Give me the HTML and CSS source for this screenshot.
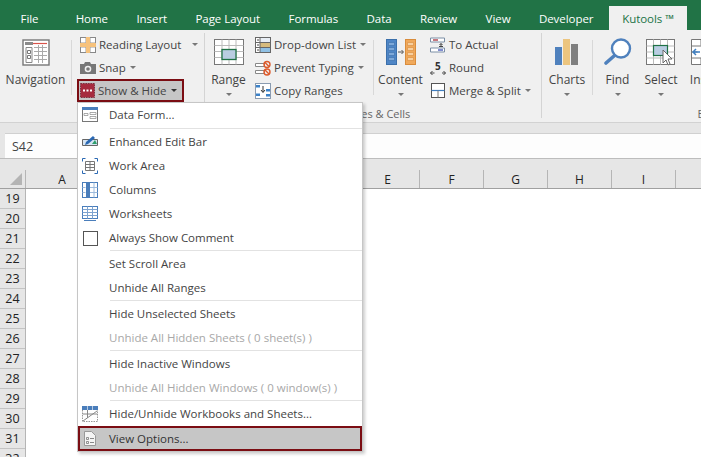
FILE: index.html
```html
<!DOCTYPE html>
<html lang="en">
<head>
    <meta charset="UTF-8">
    <title>Kutools - Show &amp; Hide</title>
    <link rel="stylesheet" href="styles.css">
</head>
<body>

    <!-- tabs -->
    <div class="tabs">
        <span class="tab tab-file">File</span>
        <span class="tab">Home</span>
        <span class="tab">Insert</span>
        <span class="tab">Page Layout</span>
        <span class="tab">Formulas</span>
        <span class="tab">Data</span>
        <span class="tab">Review</span>
        <span class="tab">View</span>
        <span class="tab">Developer</span>
        <span class="tab tab-active">Kutools ™</span>
    </div>

    <!-- ribbon -->
    <div class="ribbon">
        <div class="group group-view">
            <div class="big big-nav">
                <svg class="big-icon" width="28" height="27" viewBox="0 0 28 27">
                    <rect x="1" y="1" width="26" height="25" fill="#fff" stroke="#777" stroke-width="1.4"/>
                    <path d="M3 3h8v3H3z" fill="#8a8a8a"/>
                    <path d="M11 4.500h14" stroke="#d9534a" stroke-width="1.200"/>
                    <path d="M4 8.500h6v15H4z" fill="#fff" stroke="#888"/>
                    <path d="M5.500 11.500h3v3h-3zM5.500 16.500h3v3h-3z" fill="#fff" stroke="#777"/>
                    <path d="M12 8.500h13M12 12.500h13M12 16.500h13M12 20.500h13M16.500 6v18M20.500 6v18" stroke="#aaa"/>
                </svg>
                <span class="big-label">Navigation</span>
            </div>
            <div class="short-sep"></div>
            <div class="small-col col-view">
                <div class="small">
                    <svg width="16" height="16" viewBox="0 0 16 16">
                        <rect x=".5" y=".5" width="15" height="15" fill="#fff" stroke="#888"/>
                        <path d="M6 .5v15M10 .5v15M.5 6h15M.5 10h15" stroke="#999"/>
                        <path d="M6 0h4v16H6zM0 6h16v4H0z" fill="#f6c27c"/>
                    </svg>
                    <span class="small-label">Reading Layout</span>
                    <i class="caret caret-far"></i>
                </div>
                <div class="small">
                    <svg width="16" height="16" viewBox="0 0 16 16">
                        <path d="M0 4h4l1-2h5l1 2h5v10H0z" fill="#777"/>
                        <circle cx="8" cy="9" r="3.300" fill="#f0f0f0"/>
                        <circle cx="8" cy="9" r="1.800" fill="#777"/>
                    </svg>
                    <span class="small-label">Snap</span>
                    <i class="caret"></i>
                </div>
                <div class="small small-hl">
                    <svg width="15" height="15" viewBox="0 0 15 15">
                        <rect x=".5" y=".5" width="14" height="14" fill="#a62b3e" stroke="#7a3340" stroke-dasharray="1.500 1"/>
                        <path d="M3 6.500h2v2H3zM6.500 6.500h2v2h-2zM10 6.500h2v2h-2z" fill="#fff"/>
                    </svg>
                    <span class="small-label">Show &amp; Hide</span>
                    <i class="caret caret-dark"></i>
                </div>
            </div>
        </div>

        <div class="group group-range">
            <div class="group-body">
                <div class="big big-range">
                    <svg class="big-icon" width="30" height="26" viewBox="0 0 30 26">
                        <rect x=".5" y=".5" width="29" height="25" fill="#fff" stroke="#777"/>
                        <path d="M.5 6.500h29M.5 12.500h29M.5 18.500h29M8 .5v25M15 .5v25M22 .5v25" stroke="#bbb"/>
                        <rect x="8" y="10.500" width="14" height="10" fill="#b9cde2" stroke="#1f7246" stroke-width="1.300"/>
                    </svg>
                    <span class="big-label">Range</span>
                    <i class="caret caret-big"></i>
                </div>
                <div class="small-col col-drop">
                    <div class="small">
                        <svg width="16" height="16" viewBox="0 0 16 16">
                            <rect x=".5" y=".5" width="15" height="15" fill="#fff" stroke="#666"/>
                            <path d="M5 1h10v4H5z" fill="#e8eef5"/>
                            <path d="M5 6h10v4H5z" fill="#d6bb7d"/>
                            <path d="M5 11h10v4H5z" fill="#8fc0e4"/>
                            <path d="M5 .5v15M.5 5.500h15M.5 10.500h15" stroke="#666"/>
                            <path d="M2 3h2M2 8h2M2 13h2" stroke="#444"/>
                        </svg>
                        <span class="small-label">Drop-down List</span>
                        <i class="caret"></i>
                    </div>
                    <div class="small">
                        <svg width="16" height="16" viewBox="0 0 16 16">
                            <path d="M.5 3.500h9v3h-9zM.5 10.500h9v3h-9z" fill="#fff" stroke="#888"/>
                            <g fill="none" stroke="#dd5a2b" stroke-width="1.400">
                                <circle cx="12" cy="4.500" r="3"/>
                                <circle cx="12" cy="12" r="3"/>
                                <path d="M10 2.500l4 4M10 10l4 4"/>
                            </g>
                        </svg>
                        <span class="small-label">Prevent Typing</span>
                        <i class="caret"></i>
                    </div>
                    <div class="small">
                        <svg width="16" height="16" viewBox="0 0 16 16">
                            <rect x=".5" y=".5" width="15" height="15" fill="#fff" stroke="#8a9bb0"/>
                            <path d="M1 2h4v2.500H1zM1 10.500h4V13H1zM11 6h4v2.500h-4zM11 11h4v2.500h-4z" fill="#3b82c9"/>
                            <path d="M8 3v6M6 7l2 2.500L10 7" fill="none" stroke="#333"/>
                        </svg>
                        <span class="small-label">Copy Ranges</span>
                    </div>
                </div>
                <div class="short-sep"></div>
                <div class="big big-content">
                    <svg class="big-icon" width="30" height="26" viewBox="0 0 30 26">
                        <rect x=".5" y=".5" width="10" height="25" fill="#4f86c6" stroke="#3c70ab"/>
                        <path d="M2.500 3.500h6v3h-6zM2.500 8.500h6v3h-6zM2.500 13.500h6v3h-6zM2.500 18.500h6v3h-6z" fill="#7fa9d8" stroke="#3c70ab" stroke-width=".6"/>
                        <rect x="19.500" y=".5" width="10" height="25" fill="#f0a95b" stroke="#d98c3c"/>
                        <path d="M21.500 3.500h6v3h-6zM21.500 8.500h6v3h-6zM21.500 13.500h6v3h-6zM21.500 18.500h6v3h-6z" fill="#f7cf9f" stroke="#d98c3c" stroke-width=".6"/>
                        <path d="M12 13h5M15.500 11l2 2-2 2" fill="none" stroke="#555"/>
                    </svg>
                    <span class="big-label">Content</span>
                    <i class="caret caret-big"></i>
                </div>
                <div class="small-col col-actual">
                    <div class="small">
                        <svg width="16" height="16" viewBox="0 0 16 16">
                            <path d="M.5 1h14v4H.5zM.5 11h14v4H.5z" fill="#fff" stroke="#7b8ea5"/>
                            <path d="M3 3h5" stroke="#a01c28" stroke-width="1.200"/>
                            <path d="M8 13h5" stroke="#2b3fb0" stroke-width="1.200"/>
                            <path d="M9 9.500h4M11 9V6.500M9.500 8L11 6.500 12.500 8" fill="none" stroke="#444"/>
                        </svg>
                        <span class="small-label">To Actual</span>
                    </div>
                    <div class="small">
                        <svg width="16" height="16" viewBox="0 0 16 16">
                            <text x="5" y="10" class="round-five">5</text>
                            <path d="M.5 13h4M12 13h3.500M2.500 11l-2 2 2 2M13.500 11l2 2-2 2" fill="none" stroke="#444"/>
                        </svg>
                        <span class="small-label">Round</span>
                    </div>
                    <div class="small">
                        <svg width="16" height="15" viewBox="0 0 16 15">
                            <rect x="1.500" y=".5" width="13" height="14" fill="#fff" stroke="#555"/>
                            <path d="M1.500 7.500h13" stroke="#3f7fc1" stroke-width="1.200"/>
                            <path d="M8 7.500v7" stroke="#777"/>
                        </svg>
                        <span class="small-label">Merge &amp; Split</span>
                        <i class="caret"></i>
                    </div>
                </div>
            </div>
            <div class="group-label">Ranges &amp; Cells</div>
        </div>

        <div class="group group-edit">
            <div class="group-body">
                <div class="big big-charts">
                    <svg class="big-icon" width="24" height="26" viewBox="0 0 24 26">
                        <path d="M0 8h7v18H0z" fill="#4f81bd"/>
                        <path d="M8 0h7v26H8z" fill="#ecc57f"/>
                        <path d="M16 5h7v21h-7z" fill="#7f7f7f"/>
                    </svg>
                    <span class="big-label">Charts</span>
                    <i class="caret caret-big"></i>
                </div>
                <div class="short-sep"></div>
                <div class="big big-find">
                    <svg class="big-icon" width="28" height="27" viewBox="0 0 28 27">
                        <circle cx="17" cy="10.500" r="9" fill="#fff" stroke="#4f81bd" stroke-width="2.400"/>
                        <path d="M10 18L2 25" stroke="#4f81bd" stroke-width="3.600" stroke-linecap="round"/>
                    </svg>
                    <span class="big-label">Find</span>
                    <i class="caret caret-big"></i>
                </div>
                <div class="big big-select">
                    <svg class="big-icon" width="30" height="27" viewBox="0 0 30 27">
                        <rect x=".5" y=".5" width="28" height="25" fill="#fff" stroke="#777"/>
                        <path d="M.5 7h28M.5 13h28M.5 19h28M7.500 .5v25M14.500 .5v25M21.500 .5v25" stroke="#bbb"/>
                        <rect x="7.500" y="6.500" width="14" height="10" fill="#b9cde2" stroke="#1f7246" stroke-width="1.200"/>
                        <path d="M17 11v13l3-3 2 5 2-1-2-5h4z" fill="#fff" stroke="#666"/>
                    </svg>
                    <span class="big-label">Select</span>
                    <i class="caret caret-big"></i>
                </div>
                <div class="big big-insert">
                    <svg class="big-icon" width="30" height="27" viewBox="0 0 30 27">
                        <path d="M.5 .5h28v25H.5zM.5 7h28M.5 19h28M10 .5v6M10 19v7M19 .5v6M19 19v7M.5 13h6" fill="#fff" stroke="#777"/>
                        <path d="M2 13h7M5 10l-3 3 3 3" fill="none" stroke="#3f7fc1" stroke-width="1.500"/>
                    </svg>
                    <span class="big-label">Insert</span>
                    <i class="caret caret-big"></i>
                </div>
            </div>
            <div class="group-label">Editing Tools</div>
        </div>
    </div>

    <!-- formula bar -->
    <div class="formula-band">
        <div class="formula-bar"><span class="name-box">S42</span></div>
    </div>

    <!-- sheet -->
    <div class="sheet">
        <div class="col-heads">
            <div class="corner"></div>
            <span class="col-head col-a">A</span>
            <span class="col-head col-hidden"></span>
            <span class="col-head">E</span>
            <span class="col-head">F</span>
            <span class="col-head">G</span>
            <span class="col-head">H</span>
            <span class="col-head">I</span>
            <span class="col-head">J</span>
        </div>
        <div class="row-heads">
            <span class="row-head">19</span>
            <span class="row-head">20</span>
            <span class="row-head">21</span>
            <span class="row-head">22</span>
            <span class="row-head">23</span>
            <span class="row-head">24</span>
            <span class="row-head">25</span>
            <span class="row-head">26</span>
            <span class="row-head">27</span>
            <span class="row-head">28</span>
            <span class="row-head">29</span>
            <span class="row-head">30</span>
            <span class="row-head">31</span>
            <span class="row-head">32</span>
        </div>
    </div>

    <!-- Show & Hide dropdown -->
    <div class="menu">
        <div class="menu-item item-first">
            <svg width="16" height="15" viewBox="0 0 16 15">
                <rect x=".5" y=".5" width="15" height="14" fill="#fff" stroke="#777"/>
                <path d="M0 0h16v3H0z" fill="#4a7ebb"/>
                <path d="M2 6.500h4v2H2zM8 5.500h6v2H8zM8 9.500h6v2H8z" fill="#fff" stroke="#888" stroke-width=".7"/>
            </svg>
            <span>Data Form...</span>
        </div>
        <div class="menu-sep"></div>
        <div class="menu-item">
            <svg width="16" height="15" viewBox="0 0 16 15">
                <path d="M.5 5.500h15v6H.5z" fill="#d7e5f2" stroke="#666"/>
                <path d="M3 11l1-3 7-6 2 2-7 6z" fill="#2a68b3"/>
                <path d="M10 10l3-4 2 4z" fill="#2e9e6c"/>
            </svg>
            <span>Enhanced Edit Bar</span>
        </div>
        <div class="menu-item">
            <svg width="16" height="16" viewBox="0 0 16 16">
                <path d="M.5 3.500v-3h3M12.500 .5h3v3M15.500 12.500v3h-3M3.500 15.500h-3v-3" fill="none" stroke="#2a68b3"/>
                <path d="M3.500 3.500h9v9h-9zM3.500 6.500h9M3.500 9.500h9M8 3.500v9" fill="none" stroke="#777"/>
            </svg>
            <span>Work Area</span>
        </div>
        <div class="menu-item">
            <svg width="16" height="16" viewBox="0 0 16 16">
                <rect x=".5" y=".5" width="15" height="15" fill="#fff" stroke="#4a7ebb"/>
                <path d="M4 1h4v14H4z" fill="#4a7ebb"/>
                <path d="M.5 5.500h3M.5 10.500h3M8 5.500h7.500M8 10.500h7.500M12 .5v15" stroke="#9dbbdc"/>
            </svg>
            <span>Columns</span>
        </div>
        <div class="menu-item">
            <svg width="16" height="15" viewBox="0 0 16 15">
                <rect x=".5" y=".5" width="15" height="12" fill="#fff" stroke="#4a7ebb"/>
                <path d="M.5 3.500h15M.5 6.500h15M.5 9.500h15M5.500 .5v12M10.500 .5v12" stroke="#7ea3cf"/>
                <path d="M2 14.500h12" stroke="#4a7ebb"/>
            </svg>
            <span>Worksheets</span>
        </div>
        <div class="menu-item">
            <span class="check"></span>
            <span>Always Show Comment</span>
        </div>
        <div class="menu-sep"></div>
        <div class="menu-item"><span>Set Scroll Area</span></div>
        <div class="menu-item"><span>Unhide All Ranges</span></div>
        <div class="menu-sep"></div>
        <div class="menu-item"><span>Hide Unselected Sheets</span></div>
        <div class="menu-item item-off"><span>Unhide All Hidden Sheets ( 0 sheet(s) )</span></div>
        <div class="menu-sep"></div>
        <div class="menu-item"><span>Hide Inactive Windows</span></div>
        <div class="menu-item item-off"><span>Unhide All Hidden Windows ( 0 window(s) )</span></div>
        <div class="menu-sep"></div>
        <div class="menu-item">
            <svg width="16" height="16" viewBox="0 0 16 16">
                <rect x=".5" y=".5" width="15" height="15" fill="#fff" stroke="#999" stroke-dasharray="1.500 1"/>
                <path d="M0 0h16v4H0z" fill="#4a7ebb"/>
                <path d="M5.500 0v4M10.500 0v4" stroke="#fff" stroke-width=".6"/>
                <path d="M.5 8h15M5.500 4v8M1 15L15 5" fill="none" stroke="#888"/>
            </svg>
            <span>Hide/Unhide Workbooks and Sheets...</span>
        </div>
        <div class="menu-item item-hl">
            <svg width="12" height="15" viewBox="0 0 12 15">
                <path d="M.5 .5h7l4 4v10H.5z" fill="#f4f4f4" stroke="#999"/>
                <path d="M2.500 6.500h2v2h-2zM2.500 10.500h2v2h-2z" fill="none" stroke="#777" stroke-width=".8"/>
                <path d="M6 7.500h4M6 11.500h4" stroke="#888"/>
            </svg>
            <span>View Options...</span>
        </div>
    </div>

</body>
</html>
```

FILE: styles.css
```css
/* page */
html, body {
    margin: 0;
    height: 100%;
    overflow: hidden;
}

body {
    position: relative;
    width: 701px;
    height: 457px;
    background-color: #fff;
    font-family: 'Open Sans', 'Noto Sans', sans-serif;
    font-size: 11.5px;
    color: #444;
}

svg {
    display: block;
    flex-shrink: 0;
}

/* tabs */
.tabs {
    display: flex;
    align-items: flex-end;
    height: 30px;
    padding-left: 5px;
    background-color: #217346;
}

.tab {
    height: 24px;
    line-height: 25px;
    padding: 0 14.2px;
    color: #fff;
    white-space: nowrap;
    letter-spacing: -0.05px;
}

.tab-file {
    width: 19px;
    padding: 0 14.5px 0 15px;
    margin-right: 8px;
    text-align: center;
}

.tab-active {
    margin-left: 1.500px;
    padding: 0 13px;
    background-color: #f0f0f0;
    color: #217346;
}

/* ribbon */
.ribbon {
    display: flex;
    height: 92px;
    width: 1000px;
    border-bottom: 1px solid #d2d2d2;
    background-color: #f0f0f0;
}

.group {
    display: flex;
    flex-direction: column;
    margin: 3px 0 4px;
    border-right: 1px solid #d4d4d4;
    box-sizing: border-box;
}

.group-view {
    flex-direction: row;
    width: 205px;
}

.group-range {
    width: 337px;
}

.group-edit {
    width: 376px;
    border-right: none;
}

.group-body {
    display: flex;
    flex-shrink: 0;
    height: 73px;
}

.group-label {
    flex-shrink: 0;
    height: 16px;
    line-height: 16px;
    text-align: center;
    font-size: 11px;
    color: #666;
}

.short-sep {
    width: 1px;
    height: 55px;
    margin-top: 7px;
    background-color: #d8d8d8;
    flex-shrink: 0;
}

/* big ribbon buttons */
.big {
    display: flex;
    flex-direction: column;
    align-items: center;
    flex-shrink: 0;
    box-sizing: border-box;
    padding-top: 6px;
}

.big-icon {
    height: 26px;
    margin-bottom: 6px;
}

.big-label {
    height: 18px;
    line-height: 18px;
    font-size: 12px;
    white-space: nowrap;
}

.big-nav { width: 71px; }
.big-nav .big-icon { height: 27px; margin-bottom: 5px; }
.big-range { width: 47px; }
.big-content { width: 53px; }
.big-charts { width: 50px; }
.big-find { width: 49px; padding-top: 5px; }
.big-find .big-icon { height: 27px; }
.big-select { width: 38px; }
.big-select .big-icon { height: 27px; margin-bottom: 5px; }
.big-insert { width: 52px; }
.big-insert .big-icon { height: 27px; margin-bottom: 5px; }

/* small ribbon buttons */
.small-col {
    display: flex;
    flex-direction: column;
    flex-shrink: 0;
}

.col-view { padding: 0 0 0 5px; width: 127px; }
.col-drop { width: 121px; }
.col-actual { width: 112px; padding-left: 0; }

.small {
    display: flex;
    align-items: center;
    gap: 3px;
    height: 23px;
    padding-left: 3px;
    box-sizing: border-box;
    white-space: nowrap;
}

.small-label {
    line-height: 16px;
}

.small-hl {
    width: 107px;
    height: 23px;
    padding-left: 1px;
    border: 2px solid #7b0d13;
    background-color: #c6c6c6;
}

.caret {
    width: 0;
    height: 0;
    margin-left: 1px;
    border-left: 3px solid transparent;
    border-right: 3px solid transparent;
    border-top: 3px solid #777;
}

.caret-far { margin-left: 8px; }
.caret-dark { margin-left: 2px; border-top-color: #333; }
.caret-big { margin-top: 4px; margin-left: 0; }

.round-five {
    font-size: 10px;
    font-weight: 700;
    fill: #333;
}

/* formula bar */
.formula-band {
    height: 36px;
    box-sizing: border-box;
    padding-top: 10px;
    background-color: #e6e6e6;
    border-bottom: 1px solid #bdbdbd;
}

.formula-bar {
    height: 25px;
    box-sizing: border-box;
    margin-left: 5px;
    background-color: #fdfdfd;
    border-top: 1px solid #d0d0d0;
}

.name-box {
    display: block;
    padding-left: 7px;
    line-height: 25px;
    font-size: 12.5px;
}

/* sheet */
.sheet {
    background-color: #fff;
}

.col-heads {
    display: flex;
    height: 18px;
    padding-top: 11px;
    background-color: #e6e6e6;
    border-bottom: 1px solid #a0a0a0;
}

.corner {
    position: relative;
    width: 25px;
    flex-shrink: 0;
    border-right: 1px solid #b5b5b5;
}

.corner::after {
    content: "";
    position: absolute;
    right: 3px;
    bottom: 3px;
    border-left: 12px solid transparent;
    border-bottom: 12px solid #b4b4b4;
}

.col-head {
    width: 63px;
    flex-shrink: 0;
    border-right: 1px solid #b5b5b5;
    text-align: center;
    line-height: 19px;
    font-size: 12px;
    color: #222;
}

.col-a { width: 72px; }
.col-hidden { width: 256px; } /* B to D, behind the menu */

.row-heads {
    display: flex;
    flex-direction: column;
    width: 25px;
    border-right: 1px solid #b5b5b5;
}

.row-head {
    height: 19px;
    line-height: 20px;
    border-bottom: 1px solid #c4c4c4;
    background-color: #e6e6e6;
    text-align: center;
    font-size: 12.5px;
    color: #222;
}

/* dropdown */
.menu {
    position: absolute;
    left: 77px;
    top: 102px;
    width: 284px;
    background-color: #fff;
    border: 1px solid #c6c6c6;
    box-shadow: 2px 2px 3px rgba(0, 0, 0, 0.2);
}

.menu-item {
    display: flex;
    align-items: center;
    height: 24px;
    box-sizing: border-box;
    padding: 0 0 1px 31px;
    position: relative;
    white-space: nowrap;
    color: #444;
}

.menu-item svg,
.menu-item .check {
    position: absolute;
    left: 4px;
    top: 4px;
}

.item-first {
    margin-bottom: 1px;
}

.item-off {
    color: #a8a8a8;
}

.menu-sep {
    height: 1px;
    margin: 0 0 1px 32px;
    background-color: #e2e2e2;
}

.check {
    width: 13px;
    height: 13px;
    margin: 1px 0 0 1px;
    border: 1px solid #555;
}

.item-hl {
    height: 25px;
    padding: 0 0 1px 29px;
    border: 2px solid #7b0d13;
    background-color: #c6c6c6;
    color: #333;
}

.item-hl svg {
    left: 4px;
    top: 3px;
}
```
